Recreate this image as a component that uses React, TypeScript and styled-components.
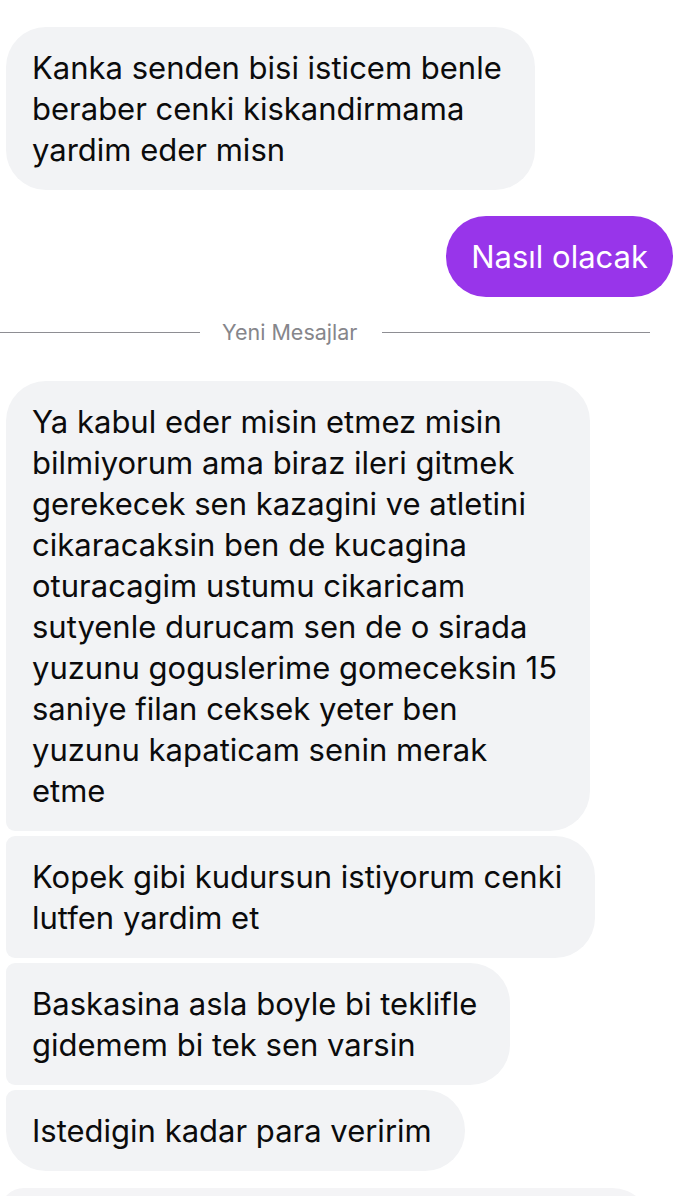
import React from 'react';
import styled, { createGlobalStyle } from 'styled-components';

type Position = 'single' | 'first' | 'middle' | 'last';

interface IMessage {
  id: number;
  mine?: boolean;
  position: Position;
  lines: string[];
}

const GlobalStyle = createGlobalStyle`
  html, body {
    margin: 0;
    padding: 0;
    background: #ffffff;
  }

  body {
    font-family: Inter, "Noto Sans", "Liberation Sans", sans-serif;
    -webkit-font-smoothing: antialiased;
  }
`;

const BIG = 40;
const SMALL = 9;

const radiusFor = (position: Position) => {
  switch (position) {
    case 'first':
      return `${BIG}px ${BIG}px ${BIG}px ${SMALL}px`;
    case 'middle':
      return `${SMALL}px ${BIG}px ${BIG}px ${SMALL}px`;
    case 'last':
      return `${SMALL}px ${BIG}px ${BIG}px ${BIG}px`;
    default:
      return `${BIG}px`;
  }
};

const Screen = styled.div`
  width: 690px;
  height: 1196px;
  overflow: hidden;
  box-sizing: border-box;
  padding: 27px 17px 0 6px;
  display: flex;
  flex-direction: column;
`;

const Row = styled.div<{ $mine?: boolean; $gap: number }>`
  display: flex;
  justify-content: ${(p) => (p.$mine ? 'flex-end' : 'flex-start')};
  margin-top: ${(p) => p.$gap}px;
`;

const Bubble = styled.div<{ $mine?: boolean; $position: Position }>`
  box-sizing: border-box;
  padding: ${(p) => (p.$mine ? '20px 25px' : '20px 33px 20px 26px')};
  font-size: 31px;
  line-height: 41px;
  letter-spacing: 0;
  white-space: nowrap;
  color: ${(p) => (p.$mine ? '#ffffff' : '#0b0b0c')};
  background: ${(p) => (p.$mine ? '#9835ea' : '#f2f3f5')};
  border-radius: ${(p) => (p.$mine ? `${BIG}px` : radiusFor(p.$position))};
`;

const Divider = styled.div`
  display: flex;
  align-items: center;
  margin: 22px -11px 0 -6px;
  padding-right: 34px;
  height: 26px;
`;

const Rule = styled.div<{ $width?: number }>`
  height: 1px;
  background: #8e8e93;
  flex: ${(p) => (p.$width ? `0 0 ${p.$width}px` : '1')};
`;

const DividerLabel = styled.span`
  padding: 0 25px 0 22px;
  font-size: 21.5px;
  color: #86868b;
`;

const NextBubble = styled.div`
  margin: 17px 0 0 -6px;
  width: 652px;
  height: 80px;
  border-radius: 24px 40px 0 0;
  background: #f4f4f6;
  flex-shrink: 0;
`;

const before: IMessage[] = [
  {
    id: 1,
    position: 'single',
    lines: ['Kanka senden bisi isticem benle', 'beraber cenki kiskandirmama', 'yardim eder misn'],
  },
  { id: 2, mine: true, position: 'single', lines: ['Nasıl olacak'] },
];

const after: IMessage[] = [
  {
    id: 3,
    position: 'first',
    lines: [
      'Ya kabul eder misin etmez misin',
      'bilmiyorum ama biraz ileri gitmek',
      'gerekecek sen kazagini ve atletini',
      'cikaracaksin ben de kucagina',
      'oturacagim ustumu cikaricam',
      'sutyenle durucam sen de o sirada',
      'yuzunu goguslerime gomeceksin 15',
      'saniye filan ceksek yeter ben',
      'yuzunu kapaticam senin merak',
      'etme',
    ],
  },
  { id: 4, position: 'middle', lines: ['Kopek gibi kudursun istiyorum cenki', 'lutfen yardim et'] },
  { id: 5, position: 'middle', lines: ['Baskasina asla boyle bi teklifle', 'gidemem bi tek sen varsin'] },
  { id: 6, position: 'last', lines: ['Istedigin kadar para veririm'] },
];

const Message: React.FC<{ message: IMessage; gap: number }> = ({ message, gap }) => (
  <Row $mine={message.mine} $gap={gap}>
    <Bubble $mine={message.mine} $position={message.position}>
      {message.lines.map((line, i) => (
        <React.Fragment key={i}>
          {i > 0 && <br />}
          {line}
        </React.Fragment>
      ))}
    </Bubble>
  </Row>
);

const App: React.FC = () => (
  <>
    <GlobalStyle />
    <Screen>
      {before.map((m, i) => (
        <Message key={m.id} message={m} gap={i === 0 ? 0 : 26} />
      ))}

      <Divider>
        <Rule $width={200} />
        <DividerLabel>Yeni Mesajlar</DividerLabel>
        <Rule />
      </Divider>

      {after.map((m, i) => (
        <Message key={m.id} message={m} gap={i === 0 ? 36 : 5} />
      ))}

      <NextBubble />
    </Screen>
  </>
);

export default App;
